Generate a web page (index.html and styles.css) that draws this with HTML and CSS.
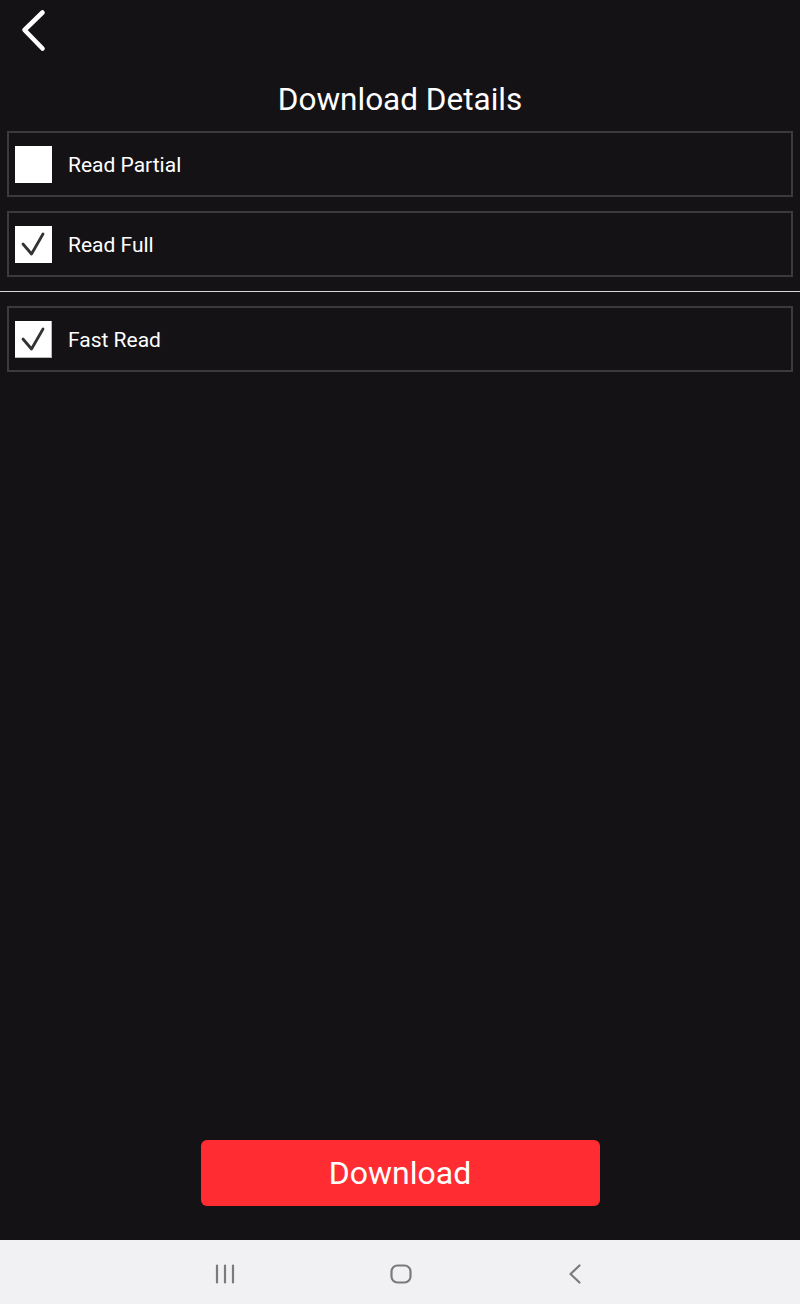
FILE: index.html
```html
<!DOCTYPE html>
<html lang="en">
<head>
<meta charset="utf-8">
<title>Download Details</title>
<link rel="stylesheet" href="styles.css">
</head>
<body>
<div class="screen">
  <header class="topbar">
    <button class="back" aria-label="Back">
      <svg width="26" height="44" viewBox="0 0 26 44"><path d="M21.5 3.5 L3.5 21 L21.5 39.5" fill="none" stroke="#fff" stroke-width="4.6" stroke-linecap="round" stroke-linejoin="round"/></svg>
    </button>
  </header>
  <h1 class="title">Download Details</h1>
  <main class="options">
    <label class="row">
      <span class="box"></span>
      <span class="label">Read Partial</span>
    </label>
    <label class="row">
      <span class="box">
        <svg width="37" height="37" viewBox="0 0 37 37"><path d="M8 18 L16.5 28 L28 8" fill="none" stroke="#333335" stroke-width="2.8" stroke-linecap="round" stroke-linejoin="round"/></svg>
      </span>
      <span class="label">Read Full</span>
    </label>
    <hr class="divider">
    <label class="row">
      <span class="box box-edge">
        <svg width="37" height="37" viewBox="0 0 37 37"><path d="M8 18 L16.5 28 L28 8" fill="none" stroke="#333335" stroke-width="2.8" stroke-linecap="round" stroke-linejoin="round"/></svg>
      </span>
      <span class="label">Fast Read</span>
    </label>
  </main>
  <div class="actions">
    <button class="download">Download</button>
  </div>
  <nav class="navbar">
    <svg width="20" height="20" viewBox="0 0 20 20"><path d="M2 1.5 V18.5 M10 1.5 V18.5 M18 1.5 V18.5" stroke="#7b7b7e" stroke-width="2.2" stroke-linecap="round"/></svg>
    <svg width="22" height="20" viewBox="0 0 22 20"><rect x="1.5" y="1.5" width="19" height="17" rx="6" fill="none" stroke="#7b7b7e" stroke-width="2.2"/></svg>
    <svg width="14" height="20" viewBox="0 0 14 20"><path d="M11.5 1.5 L2.5 10 L11.5 18.5" fill="none" stroke="#7b7b7e" stroke-width="2.2" stroke-linecap="round" stroke-linejoin="round"/></svg>
  </nav>
</div>
</body>
</html>
```

FILE: styles.css
```css
* { box-sizing: border-box; }
html, body { margin: 0; padding: 0; }
body {
  background: #141215;
  font-family: Roboto, "Noto Sans", "Liberation Sans", sans-serif;
  color: #fff;
}
.screen {
  width: 800px;
  height: 1304px;
  display: flex;
  flex-direction: column;
}
.topbar {
  height: 60px;
  display: flex;
  align-items: flex-start;
  padding: 9px 0 0 21px;
}
.back {
  background: none;
  border: 0;
  padding: 0;
  display: block;
  line-height: 0;
}
.title {
  margin: 0;
  font-weight: 400;
  font-size: 31.5px;
  line-height: 40px;
  height: 71px;
  padding-top: 20px;
  text-align: center;
}
.options {
  padding: 0 7px;
  display: flex;
  flex-direction: column;
  gap: 14px;
}
.row {
  height: 66px;
  border: 2px solid #3b3a3d;
  display: flex;
  align-items: center;
  padding-left: 6px;
  gap: 16px;
}
.box {
  width: 37px;
  height: 37px;
  background: #fff;
  display: block;
  line-height: 0;
  flex: none;
}
.box-edge { box-shadow: inset -1px -1px 0 #b8b8b8; }
.label {
  font-size: 21px;
  color: #fff;
  padding-top: 2px;
}
.divider {
  border: 0;
  height: 1px;
  background: #d8d8d8;
  margin: 0 -7px;
}
.actions {
  flex: 1;
  display: flex;
  align-items: flex-end;
  justify-content: center;
  padding-bottom: 34px;
}
.download {
  width: 399px;
  height: 66px;
  background: #ff2c31;
  border: 0;
  border-radius: 6px;
  color: #fff;
  font-family: Roboto, "Noto Sans", "Liberation Sans", sans-serif;
  font-size: 32px;
  padding: 0;
}
.navbar {
  height: 64px;
  background: #f1f0f3;
  display: flex;
  align-items: center;
  justify-content: flex-start;
  padding: 3px 0 0 215px;
}
.navbar svg:nth-child(2) { margin-left: 155px; }
.navbar svg:nth-child(3) { margin-left: 156px; }
```
